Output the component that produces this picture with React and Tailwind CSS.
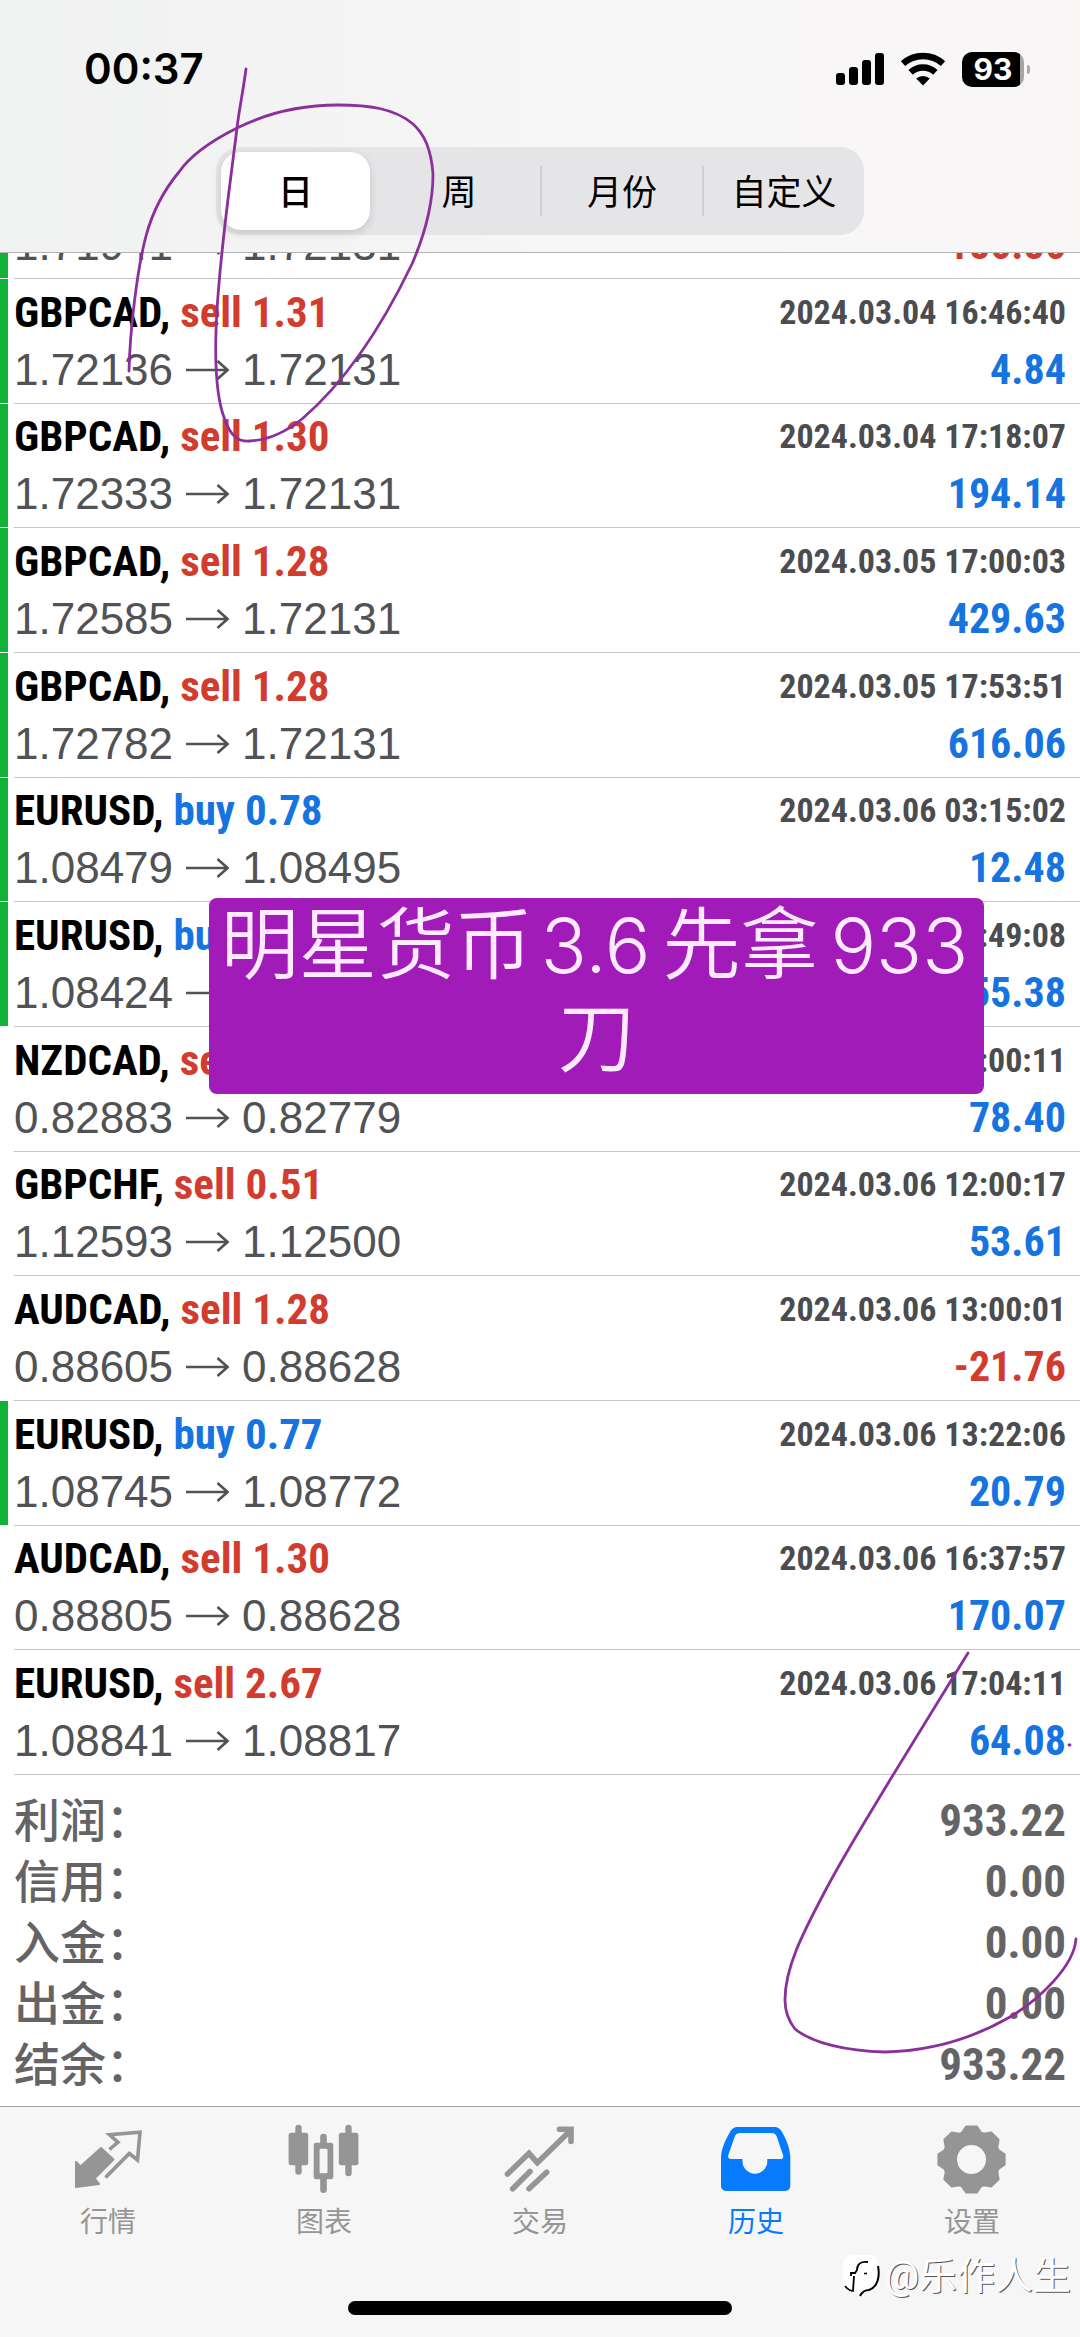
const TRADES = [
  { symbol: "GBPCAD", side: "sell", volume: "1.31", open: "1.72136", close: "1.72131", time: "2024.03.04 16:46:40", profit: "4.84", marked: true },
  { symbol: "GBPCAD", side: "sell", volume: "1.30", open: "1.72333", close: "1.72131", time: "2024.03.04 17:18:07", profit: "194.14", marked: true },
  { symbol: "GBPCAD", side: "sell", volume: "1.28", open: "1.72585", close: "1.72131", time: "2024.03.05 17:00:03", profit: "429.63", marked: true },
  { symbol: "GBPCAD", side: "sell", volume: "1.28", open: "1.72782", close: "1.72131", time: "2024.03.05 17:53:51", profit: "616.06", marked: true },
  { symbol: "EURUSD", side: "buy", volume: "0.78", open: "1.08479", close: "1.08495", time: "2024.03.06 03:15:02", profit: "12.48", marked: true },
  { symbol: "EURUSD", side: "buy", volume: "0.77", open: "1.08424", close: "1.08495", time: "2024.03.06 03:49:08", profit: "55.38", marked: true },
  { symbol: "NZDCAD", side: "sell", volume: "1.02", open: "0.82883", close: "0.82779", time: "2024.03.06 12:00:11", profit: "78.40", marked: false },
  { symbol: "GBPCHF", side: "sell", volume: "0.51", open: "1.12593", close: "1.12500", time: "2024.03.06 12:00:17", profit: "53.61", marked: false },
  { symbol: "AUDCAD", side: "sell", volume: "1.28", open: "0.88605", close: "0.88628", time: "2024.03.06 13:00:01", profit: "-21.76", marked: false },
  { symbol: "EURUSD", side: "buy", volume: "0.77", open: "1.08745", close: "1.08772", time: "2024.03.06 13:22:06", profit: "20.79", marked: true },
  { symbol: "AUDCAD", side: "sell", volume: "1.30", open: "0.88805", close: "0.88628", time: "2024.03.06 16:37:57", profit: "170.07", marked: false },
  { symbol: "EURUSD", side: "sell", volume: "2.67", open: "1.08841", close: "1.08817", time: "2024.03.06 17:04:11", profit: "64.08", marked: false },
];

const SUMMARY = [
  ["利润", "933.22"],
  ["信用", "0.00"],
  ["入金", "0.00"],
  ["出金", "0.00"],
  ["结余", "933.22"],
];

const RANGES = ["日", "周", "月份", "自定义"];

function SignalIcon() {
  return (
    <svg className="h-[34px] w-[48px]" viewBox="0 0 48 34" aria-hidden="true">
      <rect x="0" y="21" width="9" height="12" rx="3" />
      <rect x="13" y="15" width="9" height="18" rx="3" />
      <rect x="26" y="8" width="9" height="25" rx="3" />
      <rect x="39" y="1" width="9" height="32" rx="3" />
    </svg>
  );
}

function WifiIcon() {
  return (
    <svg className="h-[34px] w-[46px]" viewBox="0 0 46 34" aria-hidden="true">
      <g fill="none" stroke="#000" strokeWidth="6.4">
        <path d="M3 11.7A30 30 0 0 1 43 11.7" />
        <path d="M10.6 20.3A18.5 18.5 0 0 1 35.4 20.3" />
      </g>
      <path d="M23 33.5L16.2 26.6A10 10 0 0 1 29.8 26.6Z" />
    </svg>
  );
}

function Battery() {
  return (
    <div className="flex items-center gap-[3px]">
      <div className="flex h-[35px] w-[62px] items-center justify-center rounded-[10px] bg-linear-to-r from-black from-93% to-[#a6a5a6] to-93% font-[Inter,sans-serif] text-[30px] leading-none font-bold text-white">
        93
      </div>
      <div className="h-[9px] w-[3px] rounded-r-full bg-[#aaa]" />
    </div>
  );
}

function QuotesIcon() {
  return (
    <svg className="size-[72px]" viewBox="0 0 72 72" fill="none" stroke="currentColor" aria-hidden="true">
      <path d="M4 38L8.500 42.500L29 24L41.500 35.500L22.500 54.500L27 60L4 63Z" fill="currentColor" strokeWidth="2" strokeLinejoin="round" />
      <path d="M37.500 25.500L46 18.200L37.500 10.800L68 8.200L65.500 36L57.300 29.500L33.500 53.500" strokeWidth="3.6" />
    </svg>
  );
}

function ChartIcon() {
  return (
    <svg className="size-[72px]" viewBox="0 0 72 72" fill="currentColor" aria-hidden="true">
      <rect x="0.6" y="8.7" width="19.6" height="32.6" rx="2.5" />
      <rect x="7.3" y="0.7" width="6.4" height="50" rx="3.2" />
      <rect x="50.8" y="8.7" width="19.6" height="32.6" rx="2.5" />
      <rect x="57.3" y="0.7" width="6.4" height="51.5" rx="3.2" />
      <path d="M28.2 18.7H32.2V13A3.3 3.3 0 0 1 38.8 13V18.7H42.8A2.5 2.5 0 0 1 45.3 21.2V52.8A2.5 2.5 0 0 1 42.8 55.3H38.8V65.7A3.3 3.3 0 0 1 32.2 65.7V55.3H28.2A2.5 2.5 0 0 1 25.7 52.8V21.2A2.5 2.5 0 0 1 28.2 18.7ZM33 24.7A1.4 1.4 0 0 0 31.6 26.1V47.9A1.4 1.4 0 0 0 33 49.3H38.1A1.4 1.4 0 0 0 39.5 47.9V26.1A1.4 1.4 0 0 0 38.1 24.7Z" fillRule="evenodd" />
    </svg>
  );
}

function TradeIcon() {
  return (
    <svg className="size-[72px]" viewBox="0 0 72 72" fill="none" stroke="currentColor" strokeWidth="5.6" strokeLinecap="round" aria-hidden="true">
      <path d="M3.5 50L25 29.3L33.3 38.7L66 7" strokeLinejoin="miter" />
      <path d="M55.5 5.3H67V17.5" />
      <path d="M58 5H67.5V15Z" fill="currentColor" stroke="none" />
      <path d="M8.7 64.7L26 47.5M25 64.7L42.7 48.3" />
    </svg>
  );
}

function HistoryIcon() {
  return (
    <svg className="size-[72px]" viewBox="0 0 72 72" fill="currentColor" aria-hidden="true">
      <path d="M18 3H54C58 3 60 4.500 62 8C67 17 70.300 25 70.300 34V62A5 5 0 0 1 65.300 67H6A5 5 0 0 1 1 62V34C1 25 5 17 10 8C12 4.500 14 3 18 3ZM20 9C17.500 9 16 10 15 12L8.300 31C7.600 33.500 8.500 35 11 35H22.500V37.300A12.400 12.400 0 0 0 47.300 37.300V35H60.500C63 35 63.700 33.500 63 31L56.500 12C55.500 10 54 9 51.500 9Z" fillRule="evenodd" />
    </svg>
  );
}

const GEAR_TEETH = Array.from({ length: 8 }, (_, i) =>
  [[-9, 33.5], [9, 33.5], [19.5, 28.5], [25.5, 28.5]]
    .map(([offset, radius]) => {
      const angle = ((i * 45 + offset) * Math.PI) / 180;
      return `${(35.5 + radius * Math.sin(angle)).toFixed(2)} ${(35.5 - radius * Math.cos(angle)).toFixed(2)}`;
    })
    .join("L"),
).join("L");

function SettingsIcon() {
  return (
    <svg className="size-[72px]" viewBox="0 0 72 72" fill="currentColor" aria-hidden="true">
      <path d={`M${GEAR_TEETH}ZM35.5 20a15.500 15.500 0 1 0 0 31a15.500 15.500 0 1 0 0 -31Z`} fillRule="evenodd" stroke="currentColor" strokeWidth="2" strokeLinejoin="round" />
    </svg>
  );
}

const TABS = [
  { label: "行情", Icon: QuotesIcon },
  { label: "图表", Icon: ChartIcon },
  { label: "交易", Icon: TradeIcon },
  { label: "历史", Icon: HistoryIcon, active: true },
  { label: "设置", Icon: SettingsIcon },
];

function PriceLine({ open, close, profit }) {
  return (
    <div className="flex items-center justify-between leading-[58px]">
      <span className="flex items-center font-['Liberation_Sans',sans-serif] text-[44px] font-normal text-[#515256]">
        {open}
        <svg className="mx-[13px] h-[20px] w-[43px]" viewBox="0 0 43 20" fill="none" stroke="currentColor" strokeWidth="2.6" aria-label="→">
          <path d="M0 10H41M31.500 1L41.500 10L31.500 19" />
        </svg>
        {close}
      </span>
      <span className={profit.startsWith("-") ? "text-[42px] text-[#d23c2f]" : "text-[42px] text-[#1674e0]"}>{profit}</span>
    </div>
  );
}

function TradeRow({ trade }) {
  return (
    <li className="flex">
      <div className={trade.marked ? "mb-px w-2 bg-[#11b238]" : "w-2"} />
      <div className="ml-[6px] flex flex-1 flex-col justify-end border-b border-[#c6c6ca] pr-[14px] pb-[4px]">
        <div className="flex items-center justify-between leading-[58px]">
          <span className="text-[43px] text-black">
            {trade.symbol},{" "}
            <span className={trade.side === "buy" ? "text-[#1674e0]" : "text-[#d23c2f]"}>
              {trade.side} {trade.volume}
            </span>
          </span>
          <time className="text-[34px] text-[#4b4c50]">{trade.time}</time>
        </div>
        <PriceLine open={trade.open} close={trade.close} profit={trade.profit} />
      </div>
    </li>
  );
}

export default function App() {
  return (
    <div className="relative flex min-h-screen flex-col overflow-hidden bg-white font-['Roboto_Condensed','Noto_Sans_CJK_SC',sans-serif] font-bold">
      <header className="flex h-[253px] shrink-0 flex-col border-b border-[#b3b3b5] bg-linear-to-r from-[#f0f1f1] via-[#f7f6f6] to-[#f9f6f6]">
        <div className="flex items-center justify-between pt-[41px] pr-[50px] pl-[84px]">
          <span className="font-[Inter,sans-serif] text-[42px] leading-[56px] font-semibold text-black">00:37</span>
          <div className="flex items-center gap-4">
            <SignalIcon />
            <WifiIcon />
            <Battery />
          </div>
        </div>
        <nav className="mx-auto mt-[50px] grid h-[88px] w-3/5 grid-cols-4 items-center rounded-[24px] bg-[#e5e5e7] font-['Noto_Sans_CJK_SC',sans-serif] text-[35px] leading-none font-normal text-black">
          {RANGES.map((range, i) => (
            <button
              key={range}
              type="button"
              className={
                i === 0
                  ? "mr-2 ml-[5px] h-[78px] rounded-[20px] bg-white pb-1 font-medium shadow-[0_3px_8px_rgba(0,0,0,0.14)]"
                  : i === 1
                    ? "h-[50px] pb-1"
                    : "h-[50px] border-l-2 border-[#cfcfd1] pb-1"
              }
            >
              {range}
            </button>
          ))}
        </nav>
      </header>

      <div className="flex h-[26px] shrink-0 overflow-hidden">
        <div className="mb-px w-2 bg-[#11b238]" />
        <div className="ml-[6px] flex flex-1 flex-col justify-end border-b border-[#c6c6ca] pr-[14px] pb-[4px]">
          <PriceLine open="1.71941" close="1.72131" profit="-186.86" />
        </div>
      </div>

      <ul className="grid flex-1 auto-rows-fr">
        {TRADES.map((trade) => (
          <TradeRow key={trade.time} trade={trade} />
        ))}
      </ul>

      <dl className="shrink-0 px-[14px] pt-[15px] pb-[11px] text-[45px] leading-[61px] text-[#646466]">
        {SUMMARY.map(([label, value]) => (
          <div key={label} className="flex justify-between">
            <dt className="font-['Noto_Sans_CJK_SC',sans-serif] text-[46px] leading-[55px] font-medium">{label}：</dt>
            <dd>{value}</dd>
          </div>
        ))}
      </dl>

      <footer className="shrink-0 border-t border-[#a2a2a4] bg-[#f6f6f6] pt-[17px] pb-[22px]">
        <nav className="grid grid-cols-5">
          {TABS.map(({ label, Icon, active }) => (
            <button
              key={label}
              type="button"
              className={
                active
                  ? "flex flex-col items-center gap-1 text-[#077bfd]"
                  : "flex flex-col items-center gap-1 text-[#959595]"
              }
            >
              <Icon />
              <span className="font-['Noto_Sans_CJK_SC',sans-serif] text-[28px] leading-[40px] font-normal">{label}</span>
            </button>
          ))}
        </nav>
        <div className="mx-auto mt-[61px] h-[14px] w-[384px] rounded-full bg-black" />
      </footer>

      <p className="absolute top-[898px] left-[209px] w-[775px] rounded-lg bg-[#a01bb7] pb-[15px] text-center font-['Noto_Sans_CJK_SC',sans-serif] text-[78px] leading-[93px] font-[350] text-[#fdeaff]">
        <span className="-mt-[5px] block">
          明星货币
          <span className="mr-3 ml-2 font-[Inter,sans-serif] text-[76px] leading-none">3.6</span>
          先拿
          <span className="mr-1 ml-3 font-[Inter,sans-serif] text-[76px] leading-none">933</span>
          <br />刀
        </span>
      </p>

      <svg className="pointer-events-none absolute inset-x-0 top-0 w-full" viewBox="0 0 1080 2337" fill="none" stroke="#8a2f9c" strokeWidth="2.8" strokeLinecap="round" aria-hidden="true">
        <path d="M246 69C243 92 239 110 237 128C230 185 221 245 217 310C214 360 216 398 225 420C231 437 239 442 250 441C270 440 287 431 302 419C350 378 386 318 412 264C428 227 433 200 433 174C431 148 424 134 413 124C394 108 368 105 338 105C300 105 265 114 237 128C209 142 190 156 179 172C164 190 153 210 146 236C137 270 130 330 129 371" />
        <path d="M968 1653L890 1780C866 1820 842 1858 823 1895C802 1935 785 1968 785 2000C785 2012 788 2020 795 2029C812 2043 846 2051 885 2052C930 2051 970 2040 1010 2017C1040 1999 1074 1966 1076 1939" />
        <path d="M1069 1745H1070" />
      </svg>

      <div className="absolute right-[9px] bottom-[39px] flex items-center gap-[3px]">
        <svg className="h-[44px] w-[40px]" viewBox="0 0 40 44" aria-hidden="true">
          <path d="M12 1H26C33 1 37 5 37 12V26C37 33 33 36 27 37C23 38 20 40 18 43L16 37H12C5 37 1 33 1 26V12C1 5 5 1 12 1Z" fill="#fff" />
          <g fill="none" stroke="#000">
            <path d="M26 8C19 7 15 10 15 16L13 19H9V22M12 22L11 37" strokeWidth="1.8" />
            <path d="M22 19.500H25" strokeWidth="1.600" />
            <path d="M3 32C6 36 9 37 12 37" strokeWidth="1.600" />
            <path d="M36 12C38 22 36 33 27 36C23 36 20 38 18 42" strokeWidth="2" />
          </g>
        </svg>
        <span className="font-[Roboto,'Noto_Sans_CJK_SC',sans-serif] text-[38px] leading-[44px] font-normal text-white [text-shadow:1px_1px_0_#555]">@乐作人生</span>
      </div>
    </div>
  );
}
